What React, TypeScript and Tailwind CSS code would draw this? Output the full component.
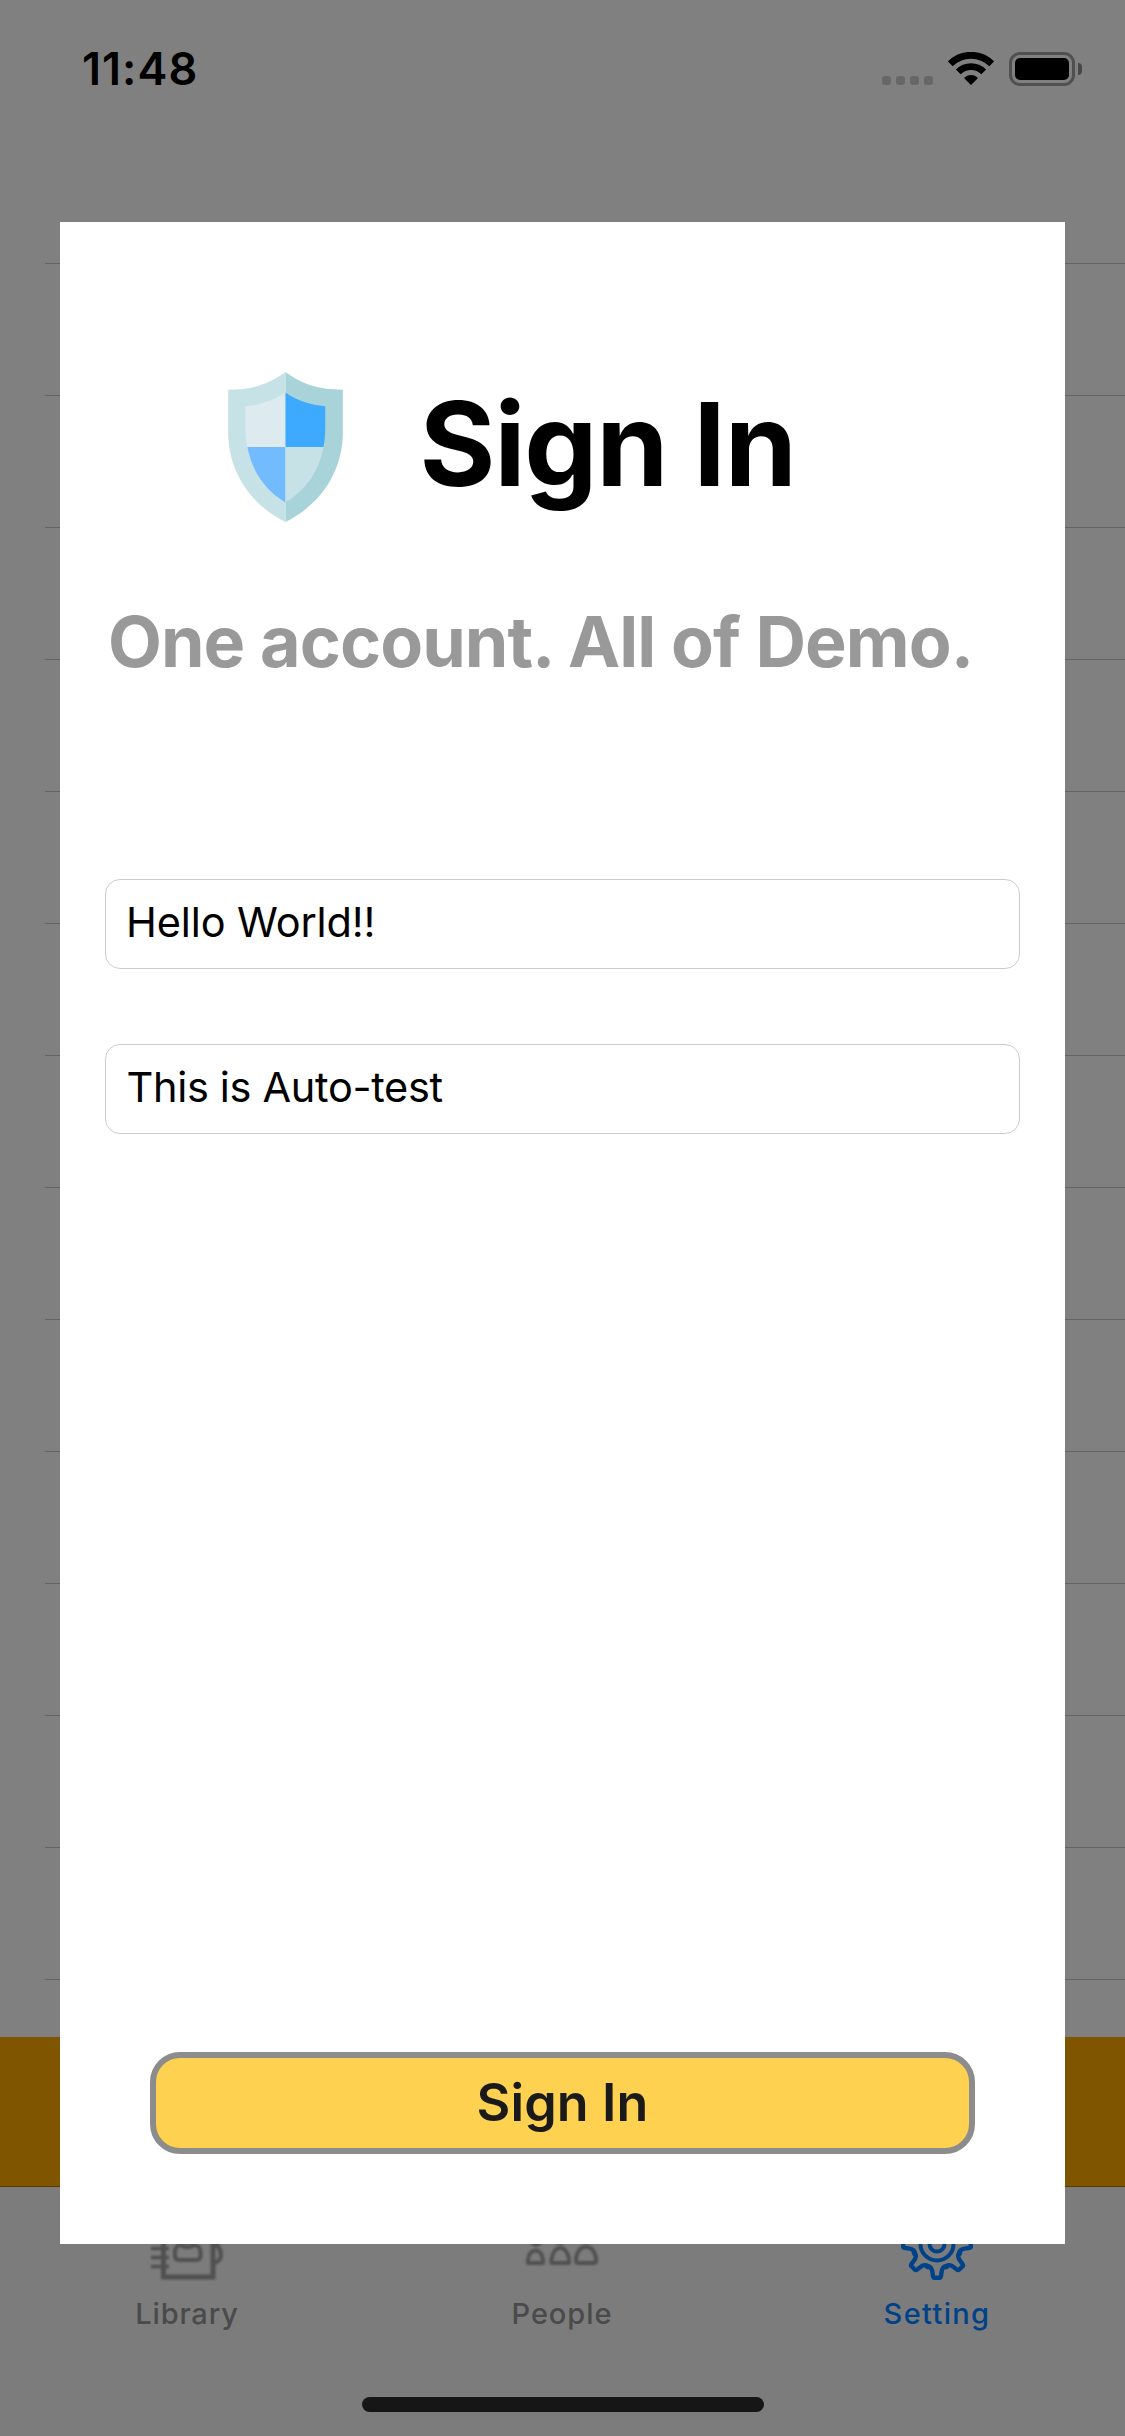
import React from "react";

function StatusBar() {
  return (
    <header className="flex h-[263px] shrink-0 items-start justify-between pr-[43px] pl-[82px]">
      <span className="mt-[41px] text-[45px] leading-[55px] font-semibold tracking-[1px] text-black">11:48</span>
      <div className="mt-[52px] flex h-[34px] items-start">
        <div className="mt-[24px] flex gap-[5px]">
          {[0, 1, 2, 3].map((i) => (
            <span key={i} className="size-[9px] rounded-[3px] bg-[#676767]" />
          ))}
        </div>
        <svg className="ml-[15px] h-[33px] w-[46px]" viewBox="0 0 46 33" fill="none">
          <path d="M2.3 11.8A29.3 29.3 0 0 1 43.7 11.8" stroke="#000" strokeWidth="6.8" />
          <path d="M10.3 19.8A18 18 0 0 1 35.7 19.8" stroke="#000" strokeWidth="6.8" />
          <path d="M16.5 26.6Q16 25.9 16.8 25.3A9.9 9.9 0 0 1 29.2 25.3Q30 25.9 29.5 26.6L23.6 32.5Q23 33 22.4 32.5Z" fill="#000" />
        </svg>
        <div className="ml-[15px] h-[34px] w-[66px] rounded-[11px] border-[3px] border-[#505050] p-[3px]">
          <div className="h-full rounded-[5px] bg-black" />
        </div>
        <span className="mt-[11px] ml-[3px] h-[12px] w-[4px] rounded-r-full bg-[#484848]" />
      </div>
    </header>
  );
}

function LibraryIcon() {
  return (
    <svg className="size-[72px] blur-[0.8px]" viewBox="0 0 72 72" fill="none" stroke="#505050" strokeWidth="4">
      <path d="M12.500 3H62V69H12.500Z" strokeWidth="5" />
      <path d="M0 13.5H18M0 22.5H18M0 31.5H18M0 40.5H18M0 49.5H18M0 58.5H18" strokeWidth="3.4" />
      <path d="M30 37C26 37 24 40 24 44V48C24 51 26 52 29 52H44C47 52 49.500 51 49.500 48V44C49.500 40 47 37 43 37Q36.500 41.500 30 37Z" />
      <circle cx="36.500" cy="25" r="9" />
      <path d="M64 15H66Q70 20 70 26T64 36M64 38H67Q70 42 70 47T64 55" />
    </svg>
  );
}

function PeopleIcon() {
  return (
    <svg className="size-[72px] blur-[0.8px]" viewBox="0 0 72 72" fill="none" stroke="#505050" strokeWidth="3.8" strokeLinejoin="round">
      <circle cx="10" cy="32" r="4.800" />
      <circle cx="34" cy="28" r="7" />
      <circle cx="60" cy="26" r="8" />
      <path d="M2 55V51.500C3 45.500 6 42.500 9.500 42.500S16 45.500 17 51.500V55Z" />
      <path d="M25.500 55V51C27 43.500 30 39.800 34.200 39.800S41.500 43.500 43 51V55Z" />
      <path d="M50 54V50C51.500 42.500 55 38.800 60 38.800S68.500 42.500 70 50V54L68 55H52Z" />
    </svg>
  );
}

function GearIcon() {
  return (
    <svg className="size-[72px] blur-[0.6px]" viewBox="0 0 72 72" fill="none" stroke="#004288" strokeWidth="4">
      <circle cx="36" cy="36" r="7.500" />
      <circle cx="36" cy="36" r="16.500" />
      {[0, 45, 90, 135, 180, 225, 270, 315].map((angle) => (
        <path
          key={angle}
          transform={`rotate(${angle} 36 36)`}
          d="M25.800 58.500C29 57.500 31.200 60.500 31.600 65Q31.800 69.800 33 69.800H39Q40.200 69.800 40.400 65C40.800 60.500 43 57.500 46.200 58.500"
          strokeWidth="4.400"
          strokeLinecap="round"
        />
      ))}
    </svg>
  );
}

function Tab({ icon, children }: { icon: React.ReactNode; children: React.ReactNode }) {
  return (
    <div className="flex flex-1 flex-col items-center pt-[21px] pr-px">
      {icon}
      <div className="mt-[16px] text-[29px] leading-[35px] font-medium text-[#4a4a4a]">{children}</div>
    </div>
  );
}

function Shield() {
  return (
    <svg className="mt-[-2px] h-[150px] w-[115px]" viewBox="53 50 345 451">
      <path d="M225.500 50C180 83 132 103 53 103V230C53 352 122 450 225.500 501Z" fill="#c7e2e6" />
      <path d="M225.500 50C271 83 319 103 398 103V230C398 352 329 450 225.500 501Z" fill="#a8d3d8" />
      <path d="M225.500 112C190 135 150 150 105 153V220Q105 248 111 275.500H225.500Z" fill="#ddebf0" />
      <path d="M225.500 112C261 137 301 150 345 153V220Q345 248 340 275.500H225.500Z" fill="#3daaff" />
      <path d="M111 275.500H225.500V442C162 404 124 346 111 275.500Z" fill="#73bbff" />
      <path d="M340 275.500H225.500V442C289 404 327 346 340 275.500Z" fill="#c7e2e6" />
    </svg>
  );
}

function SignInDialog() {
  return (
    <section className="absolute inset-x-[60px] top-[222px] flex h-[2022px] flex-col bg-white px-[45px]">
      <div className="mt-[152px] ml-[122.5px] flex h-[140px] items-start">
        <Shield />
        <h1 className="ml-[77px] text-[116px] leading-[140px] font-bold tracking-[-1.3px] whitespace-nowrap text-black">Sign In</h1>
      </div>
      <h2 className="mt-[85px] ml-[3px] text-[70px] leading-[85px] font-bold tracking-[-0.95px] whitespace-nowrap text-[#999]">
        One account. All of Demo.
      </h2>
      <div className="mt-[195px] flex flex-col gap-[75px] text-[41.5px] leading-[50px] text-black">
        <div className="flex h-[90px] items-center rounded-[15px] border border-[#ccc] pb-[4px] pl-[20px] tracking-[-0.12px]">Hello World!!</div>
        <div className="flex h-[90px] items-center rounded-[15px] border border-[#ccc] pb-[4px] pl-[20.5px] tracking-[-0.32px]">This is Auto-test</div>
      </div>
      <button className="mx-[45px] mt-auto mb-[90px] h-[102px] rounded-[30px] border-[6px] border-[#8c8c8c] bg-[#fed150] pb-[2px] text-[52px] leading-[63px] font-semibold tracking-[0.1px] text-[#1a1a1a]">
        Sign In
      </button>
    </section>
  );
}

export default function App() {
  return (
    <div className="relative flex h-[2436px] w-[1125px] flex-col overflow-hidden bg-[#808080] font-['Inter',sans-serif]">
      <StatusBar />
      <div className="ml-[45px] h-[1774px] shrink-0 overflow-hidden">
        {Array.from({ length: 14 }, (_, i) => (
          <div key={i} className="h-[132px] border-t border-[#646464]" />
        ))}
      </div>
      <div className="h-[150px] shrink-0 border-b border-[#593a00] bg-[#805500]" />
      <nav className="flex h-[210px] shrink-0 bg-[#7c7c7c]">
        <Tab icon={<LibraryIcon />}>
          <span className="tracking-[0.85px]">Library</span>
        </Tab>
        <Tab icon={<PeopleIcon />}>
          <span className="tracking-[0.95px]">People</span>
        </Tab>
        <Tab icon={<GearIcon />}>
          <span className="tracking-[1.35px] text-[#004288]">Setting</span>
        </Tab>
      </nav>
      <div className="flex flex-1 items-start justify-center bg-[#7c7c7c]">
        <div className="h-[15px] w-[402px] rounded-full bg-[#161616]" />
      </div>
      <SignInDialog />
    </div>
  );
}
